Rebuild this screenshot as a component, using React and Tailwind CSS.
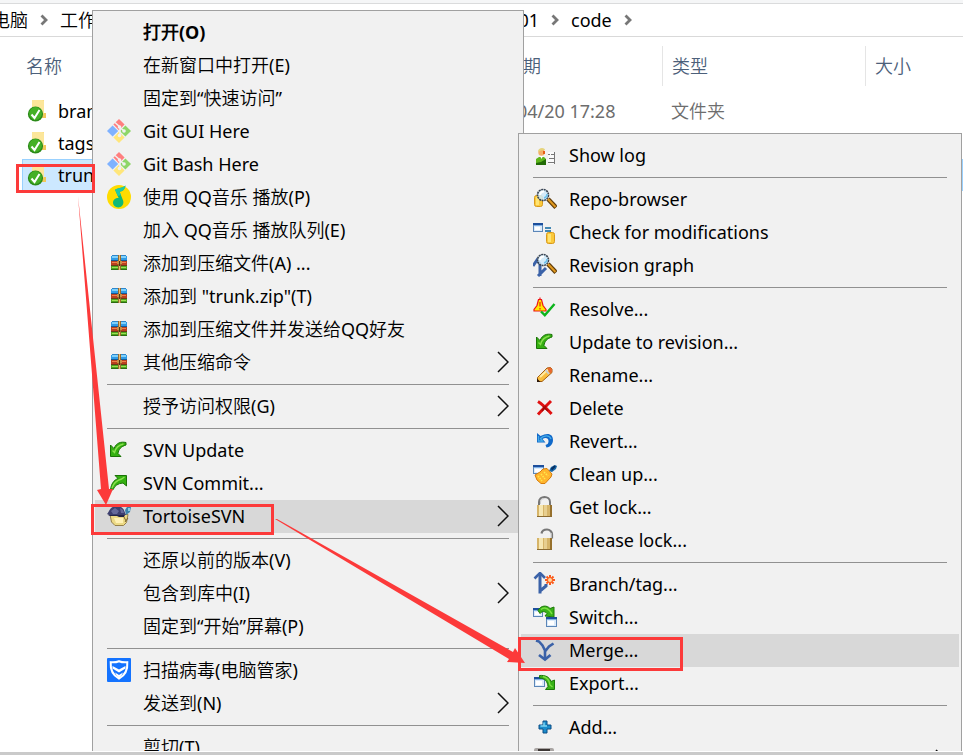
import React from 'react';
import { clsx } from 'clsx';

const Svg = ({ children, crisp }) => (
  <svg
    viewBox="0 0 24 24"
    className="h-6 w-6"
    fill="none"
    shapeRendering={crisp ? 'crispEdges' : 'auto'}
    aria-hidden="true"
  >
    {children}
  </svg>
);

/* Small pieces shared by several icons */
const MiniWindow = ({ x, y, w = 10, h = 9 }) => (
  <g>
    <rect x={x + 0.5} y={y + 0.5} width={w - 1} height={h - 1} fill="#dcebfa" stroke="#5b86b8" />
    <rect x={x} y={y} width={w} height="2" fill="#1d4f9c" />
    <rect x={x + 1} y={y + 2} width={w - 2} height="1" fill="#7fb0e6" />
    <rect x={x + 2} y={y + 4} width={w - 5} height={h - 6} fill="#fff" />
  </g>
);

const Cylinder = ({ x, y, w = 8, h = 11 }) => (
  <g>
    <rect x={x + 0.5} y={y + 0.5} width={w - 1} height={h - 1} rx="2" fill="#fbc93b" stroke="#d89a1c" />
    <rect x={x + 2} y={y + 2} width="3" height={h - 4} fill="#ffe473" />
  </g>
);

const Magnifier = ({ cx, cy }) => (
  <g>
    <circle cx={cx} cy={cy} r="5.5" fill="#cfeafa" fillOpacity="0.85" stroke="#3b4654" strokeWidth="1.6" strokeDasharray="2 0.6" />
    <path d={`M${cx - 3} ${cy}a4 4 0 0 1 4-3.500`} stroke="#fff" strokeWidth="2" />
    <path d={`M${cx + 1} ${cy + 3}a4 4 0 0 0 3-4`} stroke="#6fc3ee" strokeWidth="1.6" />
    <path d={`M${cx + 5} ${cy + 4}l8 8.5`} stroke="#5e3a07" strokeWidth="4.4" />
    <path d={`M${cx + 5} ${cy + 4}l7.5 8`} stroke="#e0991f" strokeWidth="2" />
  </g>
);

const GitIcon = () => (
  <Svg>
    <path d="M12 0l5.600 5.600L12 11.200 6.400 5.600z" fill="#ff7f7f" />
    <path d="M18.400 6.400L24 12l-5.600 5.600L12.800 12z" fill="#8ed668" />
    <path d="M12 12.800l5.600 5.600L12 24l-5.600-5.600z" fill="#ffe67a" />
    <path d="M5.600 6.400L11.200 12l-5.600 5.600L0 12z" fill="#7fb2ff" />
    <path d="M8 3.500l5 4.500v8M13 8.500l4 3.500" stroke="#f1f1f1" strokeWidth="1.500" />
    <circle cx="12.500" cy="8" r="1.800" fill="#f1f1f1" />
    <circle cx="17" cy="12" r="1.800" fill="#f1f1f1" />
    <circle cx="12.500" cy="16.500" r="1.800" fill="#f1f1f1" />
  </Svg>
);

const QQMusicIcon = () => (
  <Svg>
    <circle cx="12" cy="12" r="12" fill="#ffdc00" />
    <path d="M18.500 0.500c-2 2.200-6.500 2.300-10.500 4.200l3.600 8.200c-3-.2-5.600 1.700-5.600 4.600 0 2.700 2.300 4.900 5.200 4.900 3.200 0 5.400-2.300 5.200-5.300-.1-1.500-.7-2.500-1.200-3.800L12.600 6.800c2.700-.5 5.200-1.800 5.900-6.300z" fill="#10b978" />
    <path d="M8 4.700c4-1.900 8.500-2 10.500-4.200-.7 4.500-3.200 5.800-5.900 6.300l1.300 3.200-3 1z" fill="#20c9a8" />
  </Svg>
);

const ArchiveIcon = () => (
  <Svg crisp>
    <rect x="5" y="4" width="14" height="1" fill="#2d86cc" />
    <rect x="4" y="5" width="16" height="4" fill="#2f9be6" />
    <rect x="5" y="5" width="14" height="2" fill="#7fd0fa" />
    <rect x="4" y="9" width="16" height="1" fill="#155a96" />
    <rect x="4" y="10" width="16" height="4" fill="#b9401f" />
    <rect x="5" y="11" width="14" height="1" fill="#f0814a" />
    <rect x="4" y="14" width="16" height="1" fill="#6b3a16" />
    <rect x="4" y="15" width="16" height="3" fill="#4fa51f" />
    <rect x="5" y="16" width="14" height="1" fill="#9be052" />
    <rect x="4" y="18" width="16" height="1" fill="#2c6b12" />
    <rect x="11" y="4" width="3" height="15" fill="#9a6a2c" />
    <rect x="12" y="4" width="1" height="15" fill="#e8bc72" />
    <rect x="10" y="10" width="5" height="3" fill="#c99046" />
    <rect x="12" y="10" width="1" height="5" fill="#4e3411" />
  </Svg>
);

const UpdateIcon = () => (
  <Svg>
    <path d="M3.500 7v11.500H14l-3-3c.5-4 3-7 8-8.500V4.500c-5-1-9.500 0-12 6z" fill="#35b012" stroke="#1a7406" />
    <path d="M5.500 12.500l2 2c1-4 4-7.500 9-8.500" stroke="#8be04f" strokeWidth="1.400" />
  </Svg>
);

const CommitIcon = () => (
  <Svg>
    <path d="M19.500 15V4.500H8l3 3c-4.500 2-6.500 5-7.500 11l2.500.3c1.500-4 5-6.500 10-6.800z" fill="#35b012" stroke="#1a7406" />
    <path d="M5 17c1.500-5 4.500-7.500 9.500-9l3-2" stroke="#8be04f" strokeWidth="1.400" />
  </Svg>
);

const TortoiseIcon = () => (
  <Svg>
    <path d="M3 10.500h18l-1.500 8-3 3H8l-3.500-3.500z" fill="#ecd985" stroke="#95804a" />
    <path d="M7 14h9v5H9z" fill="#fff1b5" />
    <path d="M0 10c2-1.500 2-7 9-8 5-.5 7.500 2 8.500 5.500L19 11H2z" fill="#3d3f6f" />
    <path d="M4 7l4-3 4 3-2 3H6zM13 4l3 2 1 3h-3z" fill="#65699a" />
    <path d="M1 11h17l-1 2h-5l-2-1H3z" fill="#23254a" />
    <path d="M18 6l2-3h4l-1 5-4 3z" fill="#3c83ac" />
    <path d="M21 4h2v3h-2z" fill="#8accdf" />
    <path d="M17 13l2 4M18 18l3-4" stroke="#7c682f" />
  </Svg>
);

const ShieldIcon = () => (
  <Svg>
    <rect width="24" height="24" rx="1" fill="#1473ff" />
    <path d="M12 3.200c3 1.200 5.500 1.300 8.300 1C20.800 11 18.500 17 12 20.500 5.500 17 3.200 11 3.700 4.200c2.800.3 5.300.2 8.300-1z" stroke="#fff" strokeWidth="2" />
    <path d="M5.500 8L12 11.500 18.500 8v2.500L12 14.600l-6.500-4.100z" fill="#fff" />
    <path d="M8 14.500l4 2.400 4-2.400-1.500 3L12 19.500l-2.500-2z" fill="#fff" />
  </Svg>
);

const LogIcon = () => (
  <Svg>
    <path d="M3 22v-6l3-2h5l2 2v6z" fill="#5db51c" />
    <path d="M3 22v-2l5-1 5-3v6z" fill="#226a07" />
    <circle cx="8.500" cy="9.500" r="3.200" fill="#f4b06a" />
    <path d="M5 9c0-3 2-4 4-4s3 1 3 2l-4 .5z" fill="#e6d47c" />
    <path d="M10 8h2v3h-2z" fill="#e65d17" />
    <path d="M7 13h3l-1.500 3z" fill="#fff" />
    <rect x="15" y="9" width="7" height="12" fill="#fafafa" />
    <path d="M21.500 9v12M15 11.500h2m1 0h3M16 15.500h5M15 19.500h6" stroke="#777" />
  </Svg>
);

const RepoIcon = () => (
  <Svg>
    <Cylinder x={1} y={8} w={9} h={12} />
    <Magnifier cx={10} cy={8} />
  </Svg>
);

const CheckModIcon = () => (
  <Svg>
    <MiniWindow x={0} y={3} />
    <path d="M12 8h6M12 11h6" stroke="#0a64a0" strokeWidth="1.600" />
    <Cylinder x={13} y={12} w={9} h={12} />
  </Svg>
);

const RevisionIcon = () => (
  <Svg>
    <path d="M0 13l4-6 3 4v12M5 23l8-8" stroke="#3b62a8" strokeWidth="3" />
    <Magnifier cx={10} cy={7} />
  </Svg>
);

const ResolveIcon = () => (
  <Svg>
    <path d="M5.500 2.500h3l1.500 6 3 4v1.500H1V12.500l3-4z" fill="#ffeb00" stroke="#f01414" strokeWidth="1.200" />
    <path d="M7 0.500v2M7 5v4.500M7 11v1.600" stroke="#f01414" strokeWidth="1.200" />
    <path d="M8 14.500l3.800 3.700L21.500 7" stroke="#0cb41c" strokeWidth="2.400" />
  </Svg>
);

const RenameIcon = () => (
  <Svg>
    <path d="M4.500 18.500v-4L14 5l3.500-.5 1.500 1.500v3.500L9 18.500z" fill="#f9bd3d" stroke="#a35e12" />
    <path d="M7 14l8-7.500" stroke="#ffeaa0" strokeWidth="2" />
    <path d="M14 5l3.500-.5L19 6v3l-2 1.500z" fill="#e8692e" />
    <path d="M12.500 7L16 11" stroke="#c4ccd8" strokeWidth="1.800" />
    <path d="M4 19v-3.500L7.500 19z" fill="#2c1708" />
  </Svg>
);

const DeleteIcon = () => (
  <Svg>
    <path d="M5 5.500c5 3 8.500 7 13.500 12.500M18 5c-4 4-8 8-13 13.500" stroke="#e01010" strokeWidth="3" />
    <path d="M10 10.500l5 4.500M13 10l-4 5" stroke="#9e0808" strokeWidth="1.600" />
  </Svg>
);

const RevertIcon = () => (
  <Svg>
    <path d="M4 4v9.500h8.500L9.500 10c3-2 6-1 6 2s-1.500 3.500-3 4l1 2.500c4-.5 6.500-3.500 6.500-7.500 0-6-5-8-12.500-4z" fill="#1169c9" />
    <path d="M5.500 7v5h4l-2-2.500c3-3 9-4 10.500.5" stroke="#45abe8" strokeWidth="1.300" />
  </Svg>
);

const CleanIcon = () => (
  <Svg>
    <MiniWindow x={0} y={3} w={11} />
    <path d="M16 9l2-4 4-2 2 1-1 3-4 3z" fill="#1766a5" />
    <path d="M18.500 7.500L22 4" stroke="#072f62" strokeWidth="2" />
    <path d="M2 13l5-3 3-3 4-.5L19 12l-1 3-6 6.500H8L4 18z" fill="#ffb52e" stroke="#d77d0b" />
    <path d="M5 14l4 5M8 12l4 5M11 10l4 4" stroke="#ffe84a" strokeWidth="1.600" strokeDasharray="1.600 1" />
  </Svg>
);

const LockBody = () => (
  <g>
    <rect x="4" y="10" width="15" height="12" fill="#d6b468" />
    <rect x="6" y="10" width="4" height="12" fill="#f7e7b2" />
    <rect x="11" y="10" width="3" height="12" fill="#e8cf8f" />
    <rect x="17" y="10" width="2" height="12" fill="#96702c" />
    <rect x="4" y="21" width="15" height="1" fill="#8a6a30" />
  </g>
);

const LockIcon = () => (
  <Svg>
    <path d="M6 11V7c0-3 2.500-5 5.500-5S17 4 17 7v4" stroke="#777" strokeWidth="2" />
    <path d="M7.500 9V7c0-2 1.500-3.500 4-3.500" stroke="#ccc" />
    <LockBody />
  </Svg>
);

const UnlockIcon = () => (
  <Svg>
    <path d="M8.500 5.500C9 2.500 11 1.500 14 1.500S19 4 19 6v4.500" stroke="#777" strokeWidth="2.200" />
    <path d="M18.500 5v5" stroke="#b8b8b8" />
    <LockBody />
  </Svg>
);

const BranchIcon = () => (
  <Svg>
    <path d="M7 2v19.500M7 19l6-5v-2" stroke="#3b62a8" strokeWidth="3" />
    <path d="M1.500 6.500L7 1l5 5" stroke="#3b62a8" strokeWidth="2.600" />
    <path d="M17 3v10M12 8h10M13.500 4.500l7 7M20.500 4.500l-7 7" stroke="#fb5a1b" strokeWidth="2" />
    <circle cx="17" cy="8" r="2.500" fill="#ffd9a3" stroke="#fb5a1b" />
  </Svg>
);

const SwitchIcon = () => (
  <Svg>
    <MiniWindow x={0} y={3} w={10} h={9} />
    <path d="M5 5.500C8 0 14 0 17 3.500L21 2v10l-9-1 2-2.500c-2-2.500-5-2.500-7 0z" fill="#38b218" stroke="#1c7a08" />
    <path d="M8 4.500c3-2.500 6-1.500 9 1.500l2 3" stroke="#7ee044" strokeWidth="1.400" />
    <MiniWindow x={13} y={12} w={11} h={10} />
  </Svg>
);

const MergeIcon = () => (
  <Svg>
    <path d="M3 2.500l3 1 3.500 4 2.500 5V21M20.500 5.500l-4.500 3-4 5" stroke="#3b62a8" strokeWidth="2.600" />
    <path d="M6 17l6 4.500 5.500-4.500" stroke="#3b62a8" strokeWidth="2.800" />
  </Svg>
);

const ExportIcon = () => (
  <Svg>
    <MiniWindow x={1} y={6} w={11} h={10} />
    <path d="M6.500 4.500c6-.5 10 1.500 11.500 6l3.500-1.500v9.500h-9l2.500-3C14.500 10.500 12 7.500 6.500 7z" fill="#38b218" stroke="#1c7a08" />
    <path d="M10 5.500c4 1 6.500 4 7 8.500l2.500 2" stroke="#7ee044" strokeWidth="1.400" />
  </Svg>
);

const AddIcon = () => (
  <Svg>
    <path d="M10 6h4v4h4v4h-4v4h-4v-4H6v-4h4z" fill="#1b8ccb" stroke="#0c4f86" />
    <path d="M11 7.500v3.500H7.500M11 11h3" stroke="#7fd3f2" strokeWidth="1.500" />
  </Svg>
);

const ShelveIcon = () => (
  <Svg>
    <rect x="1" y="0" width="20" height="7" rx="2" fill="#a9a5a3" />
    <rect x="5" y="1" width="12" height="5" fill="#3c3634" />
  </Svg>
);

const FolderIcon = () => (
  <svg viewBox="0 0 20 24" className="h-6 w-5 shrink-0" aria-hidden="true">
    <path d="M5 1h12v13h2v5H5z" fill="#f9da7c" />
    <path d="M5 1h10l2 1v12H5z" fill="#fce69a" />
    <path d="M17 14h2v5h-4z" fill="#f2c85c" />
    <circle cx="8.500" cy="15" r="7.600" fill="#2a8a18" />
    <circle cx="8.500" cy="14.500" r="6.400" fill="#45b026" />
    <path d="M4.500 15.500l3 3.500 5-8" fill="none" stroke="#fff" strokeWidth="2" />
  </svg>
);

const CrumbArrow = () => (
  <span className="flex w-8 shrink-0 justify-center">
    <svg viewBox="0 0 8 12" className="h-3 w-2" fill="none" aria-hidden="true">
      <path d="M1.500 1.500L6 6l-4.500 4.500" stroke="#777" strokeWidth="2.800" />
    </svg>
  </span>
);

const SubmenuArrow = () => (
  <svg viewBox="0 0 12 22" className="ml-auto h-[22px] w-3 shrink-0" fill="none" aria-hidden="true">
    <path d="M1 1l10 10L1 21" stroke="#111" strokeWidth="1.500" />
  </svg>
);

// null stands for a separator line
const contextItems = [
  { label: '打开(O)', bold: true },
  { label: '在新窗口中打开(E)' },
  { label: '固定到“快速访问”' },
  { label: 'Git GUI Here', icon: GitIcon },
  { label: 'Git Bash Here', icon: GitIcon },
  { label: '使用 QQ音乐 播放(P)', icon: QQMusicIcon },
  { label: '加入 QQ音乐 播放队列(E)' },
  { label: '添加到压缩文件(A) ...', icon: ArchiveIcon },
  { label: '添加到 "trunk.zip"(T)', icon: ArchiveIcon },
  { label: '添加到压缩文件并发送给QQ好友', icon: ArchiveIcon },
  { label: '其他压缩命令', icon: ArchiveIcon, submenu: true },
  null,
  { label: '授予访问权限(G)', submenu: true },
  null,
  { label: 'SVN Update', icon: UpdateIcon },
  { label: 'SVN Commit...', icon: CommitIcon },
  { label: 'TortoiseSVN', icon: TortoiseIcon, submenu: true, active: true },
  null,
  { label: '还原以前的版本(V)' },
  { label: '包含到库中(I)', submenu: true },
  { label: '固定到“开始”屏幕(P)' },
  null,
  { label: '扫描病毒(电脑管家)', icon: ShieldIcon },
  { label: '发送到(N)', submenu: true },
  null,
  { label: '剪切(T)' },
];

const svnItems = [
  { label: 'Show log', icon: LogIcon },
  null,
  { label: 'Repo-browser', icon: RepoIcon },
  { label: 'Check for modifications', icon: CheckModIcon },
  { label: 'Revision graph', icon: RevisionIcon },
  null,
  { label: 'Resolve...', icon: ResolveIcon },
  { label: 'Update to revision...', icon: UpdateIcon },
  { label: 'Rename...', icon: RenameIcon },
  { label: 'Delete', icon: DeleteIcon },
  { label: 'Revert...', icon: RevertIcon },
  { label: 'Clean up...', icon: CleanIcon },
  { label: 'Get lock...', icon: LockIcon },
  { label: 'Release lock...', icon: UnlockIcon },
  null,
  { label: 'Branch/tag...', icon: BranchIcon },
  { label: 'Switch...', icon: SwitchIcon },
  { label: 'Merge...', icon: MergeIcon, active: true },
  { label: 'Export...', icon: ExportIcon },
  null,
  { label: 'Add...', icon: AddIcon },
  { label: '', icon: ShelveIcon, submenu: true },
];

const files = [
  { name: 'branches', date: '2020/04/20 17:28', type: '文件夹' },
  { name: 'tags' },
  { name: 'trunk', selected: true },
];

const Menu = ({ items, className, label }) => (
  <div role="menu" aria-label={label} className={clsx('absolute border border-[#a0a0a0] bg-[#f1f1f1] px-0.5 py-[5px]', className)}>
    {items.map((item, i) => {
      if (!item) {
        return (
          <div key={i} role="separator" className="flex h-[11px] items-center px-3">
            <div className="h-px w-full bg-[#919191]" />
          </div>
        );
      }
      const Icon = item.icon;
      return (
        <button
          key={i}
          type="button"
          role="menuitem"
          className={clsx(
            'flex h-[33px] w-full items-center gap-3 px-3 pb-px text-left text-lg leading-6 whitespace-nowrap text-black',
            item.bold && 'font-bold',
            item.active && 'bg-[#d8d8d8]'
          )}
        >
          <span className="h-6 w-6 shrink-0">{Icon && <Icon />}</span>
          <span>{item.label}</span>
          {item.submenu && <SubmenuArrow />}
        </button>
      );
    })}
  </div>
);

const App = () => {
  return (
    <div className="flex h-screen flex-col overflow-hidden bg-white font-['Noto_Sans','Noto_Sans_CJK_SC_DemiLight','Noto_Sans_CJK_SC',sans-serif] text-lg leading-6">
      <div className="relative min-h-0 flex-1 overflow-hidden">
        <div className="h-1 border-b border-[#dadbdc] bg-[#f5f6f7]" />

        {/* Address bar */}
        <nav aria-label="地址" className="flex h-[33px] items-center border-b border-[#d9d9d9] text-black">
          <span className="flex w-7 shrink-0 justify-end overflow-hidden whitespace-nowrap">电脑</span>
          <CrumbArrow />
          <span className="w-[450px] shrink-0">工作</span>
          <span className="w-[29px] shrink-0 text-right">01</span>
          <CrumbArrow />
          <span>code</span>
          <CrumbArrow />
        </nav>

        {/* File list */}
        <table className="ml-[22px] w-[calc(100%-22px)] table-fixed border-collapse text-left">
          <colgroup>
            <col className="w-[439px]" />
            <col className="w-[201px]" />
            <col className="w-[203px]" />
            <col />
          </colgroup>
          <thead>
            <tr className="h-[58px] text-[#4c607a]">
              <th className="pl-1 font-normal">名称</th>
              <th className="pl-2 font-normal">修改日期</th>
              <th className="p-0 font-normal">
                <div className="flex h-10 items-center border-l border-[#e5e5e5] pl-[9px]">类型</div>
              </th>
              <th className="p-0 font-normal">
                <div className="flex h-10 items-center border-l border-[#e5e5e5] pl-[9px]">大小</div>
              </th>
            </tr>
          </thead>
          <tbody>
            {files.map((file) => (
              <tr
                key={file.name}
                className={clsx('h-8 text-[#6d6d6d]', file.selected && 'bg-[#cce8ff] outline -outline-offset-1 outline-[#99d1ff]')}
              >
                <td className="p-0 pl-[5px]">
                  <div className="flex items-center gap-[11px] text-black">
                    <FolderIcon />
                    {file.name}
                  </div>
                </td>
                <td className="p-0 pl-2">{file.date}</td>
                <td className="p-0 pl-[9px]">{file.type}</td>
                <td />
              </tr>
            ))}
          </tbody>
        </table>

        <Menu items={contextItems} label="文件夹" className="top-[10px] left-[92px] w-[432px]" />
        <Menu items={svnItems} label="TortoiseSVN" className="top-[133px] left-[518px] w-[444px]" />

        {/* Red marks showing the click path */}
        <div className="absolute top-[164px] left-4 h-[29px] w-[79px] border-3 border-[#fc3a3a]" />
        <div className="absolute top-[504px] left-[91px] h-[31px] w-[183px] border-3 border-[#fc3a3a]" />
        <div className="absolute top-[637px] left-[518px] h-[34px] w-[165px] border-3 border-[#fc3a3a]" />
        <svg viewBox="0 0 530 670" className="pointer-events-none absolute top-0 left-0 h-[670px] w-[530px]" fill="#fc3a3a" aria-hidden="true">
          <path d="M78 196L109 489H113L106 505L97 490L101 489Z" />
          <path d="M275 519L277 519L513 652L515 648L525 663L507 662L509 659Z" />
        </svg>
      </div>
      <div className="h-1 shrink-0 border-t border-white bg-[#cacaca]" />
    </div>
  );
};

export default App;
